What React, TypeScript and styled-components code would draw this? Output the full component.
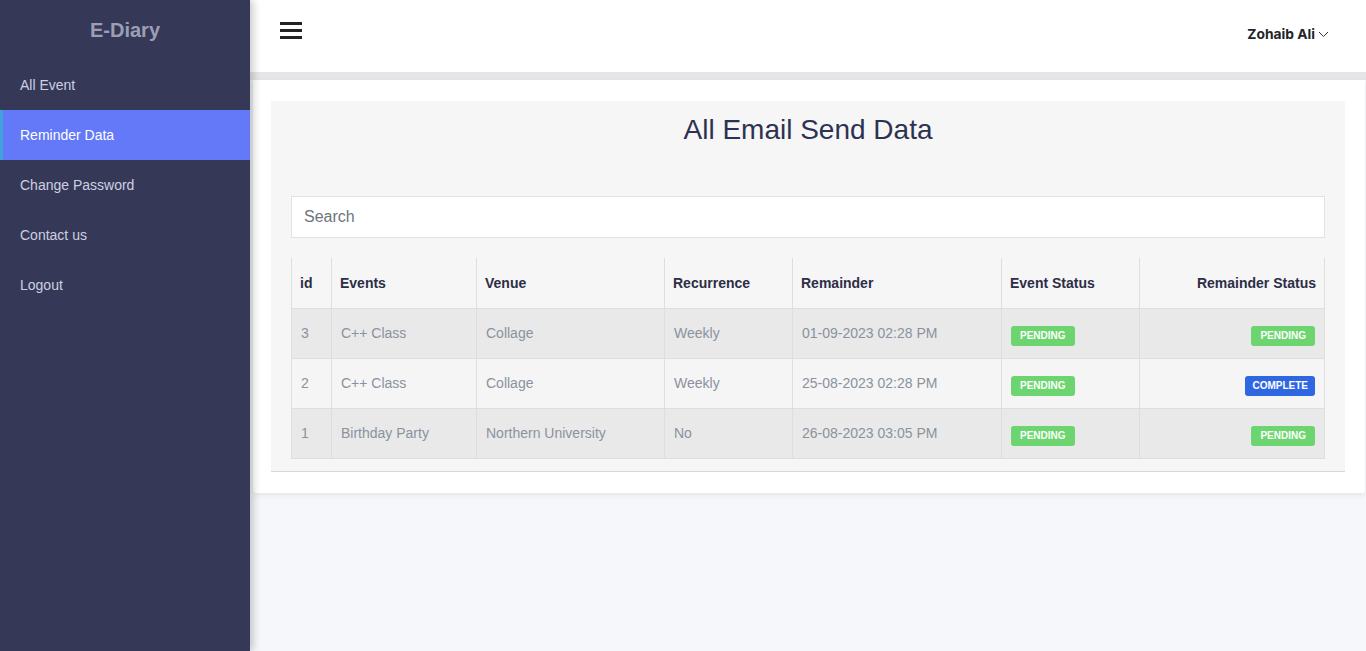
import React from "react";
import styled, { createGlobalStyle } from "styled-components";

const Global = createGlobalStyle`
  html, body { margin: 0; padding: 0; }
  body {
    font-family: "Liberation Sans", Arial, sans-serif;
    background: #f7f8fc;
  }
  * { box-sizing: border-box; }
`;

const Shell = styled.div`
  display: flex;
  width: 1366px;
  height: 651px;
  overflow: hidden;
`;

const Sidebar = styled.aside`
  width: 250px;
  flex-shrink: 0;
  height: 100%;
  background: #353957;
  box-shadow: 3px 0 8px rgba(0, 0, 0, 0.22);
  position: relative;
  z-index: 2;
  display: flex;
  flex-direction: column;
`;

const Brand = styled.div`
  height: 60px;
  display: flex;
  align-items: center;
  justify-content: center;
  font-size: 20px;
  font-weight: 700;
  color: #9c9fb3;
`;

const NavItem = styled.a<{ $active?: boolean }>`
  display: flex;
  align-items: center;
  height: 50px;
  font-size: 14px;
  color: ${(p) => (p.$active ? "#ffffff" : "#cdd0e3")};
  background: ${(p) => (p.$active ? "#6379f8" : "transparent")};
  border-left: 3px solid ${(p) => (p.$active ? "#3fa2d9" : "transparent")};
  padding-left: 17px;
  text-decoration: none;
  cursor: pointer;
`;

const Main = styled.div`
  flex: 1;
  display: flex;
  flex-direction: column;
  background: #f6f7fb;
`;

const Header = styled.header`
  height: 80px;
  background: #fff;
  border-bottom: 8px solid #e6e6e9;
  display: flex;
  align-items: flex-start;
  justify-content: space-between;
  padding: 22px 37px 0 30px;
`;

const Burger = styled.button`
  border: none;
  background: none;
  padding: 0;
  display: flex;
  cursor: pointer;
`;

const User = styled.div`
  display: flex;
  align-items: center;
  gap: 3px;
  font-family: Inter, "Liberation Sans", sans-serif;
  font-weight: 700;
  font-size: 13.8px;
  color: #212529;
  margin-top: 4px;
`;

const Card = styled.section`
  margin: 0 1px 0 3px;
  background: #fff;
  padding: 21px 20px 21px 18px;
  box-shadow: 0 2px 6px rgba(0, 0, 0, 0.08);
  border-radius: 0 0 3px 3px;
`;

const Panel = styled.div`
  background: #f6f6f6;
  border-bottom: 1px solid #d8d8d8;
  padding: 12px 20px 12px 20px;
`;

const Title = styled.h2`
  margin: 0 0 50px;
  text-align: center;
  font-weight: 400;
  font-size: 28px;
  line-height: 33px;
  color: #2e3252;
`;

const Search = styled.input`
  display: block;
  width: 100%;
  height: 42px;
  border: 1px solid #e2e2e2;
  background: #fff;
  padding: 0 12px;
  font-family: "Liberation Sans", Arial, sans-serif;
  font-size: 16px;
  color: #495057;
  outline: none;
  &::placeholder { color: #6d747c; }
`;

const Table = styled.table`
  margin-top: 20px;
  width: 100%;
  border-collapse: collapse;
  table-layout: fixed;
  font-size: 14px;
`;

const Th = styled.th<{ $right?: boolean }>`
  height: 50px;
  padding: 0 8px;
  text-align: ${(p) => (p.$right ? "right" : "left")};
  font-weight: 700;
  color: #2c2d47;
  border-left: 1px solid #dedede;
  border-right: 1px solid #dedede;
  border-bottom: 1px solid #dedede;
`;

const Tr = styled.tr<{ $odd?: boolean }>`
  background: ${(p) => (p.$odd ? "#e9e9e9" : "#f5f5f5")};
`;

const Td = styled.td<{ $right?: boolean }>`
  height: 50px;
  padding: 0 9px;
  color: #8a929e;
  text-align: ${(p) => (p.$right ? "right" : "left")};
  border: 1px solid #dedede;
`;

const Badge = styled.span<{ $tone: "green" | "blue" }>`
  display: inline-block;
  font-size: 10px;
  font-weight: 700;
  color: #fff;
  background: ${(p) => (p.$tone === "green" ? "#6dd56f" : "#2f67e2")};
  border-radius: 3px;
  line-height: 20px;
  height: 20px;
  margin-top: 5px;
  padding: 0 ${(p) => (p.$tone === "green" ? "9px" : "7px")};
  vertical-align: middle;
`;

const rows = [
  { id: 3, ev: "C++ Class", venue: "Collage", rec: "Weekly", rem: "01-09-2023 02:28 PM", rs: "PENDING" },
  { id: 2, ev: "C++ Class", venue: "Collage", rec: "Weekly", rem: "25-08-2023 02:28 PM", rs: "COMPLETE" },
  { id: 1, ev: "Birthday Party", venue: "Northern University", rec: "No", rem: "26-08-2023 03:05 PM", rs: "PENDING" },
];

const widths = [40, 145, 188, 128, 209, 138, 185];

export default function App() {
  return (
    <Shell>
      <Global />
      <Sidebar>
        <Brand>E-Diary</Brand>
        <NavItem>All Event</NavItem>
        <NavItem $active>Reminder Data</NavItem>
        <NavItem>Change Password</NavItem>
        <NavItem>Contact us</NavItem>
        <NavItem>Logout</NavItem>
      </Sidebar>
      <Main>
        <Header>
          <Burger aria-label="menu">
            <svg width="22" height="17" viewBox="0 0 22 17">
              <rect x="0" y="0" width="22" height="3" fill="#222" />
              <rect x="0" y="7" width="22" height="3" fill="#222" />
              <rect x="0" y="14" width="22" height="3" fill="#222" />
            </svg>
          </Burger>
          <User>
            Zohaib Ali
            <svg width="11" height="7" viewBox="0 0 11 7">
              <polyline points="1,1 5.5,5.5 10,1" fill="none" stroke="#333" strokeWidth="1" />
            </svg>
          </User>
        </Header>
        <Card>
          <Panel>
            <Title>All Email Send Data</Title>
            <Search placeholder="Search" />
            <Table>
              <colgroup>
                {widths.map((w, i) => (
                  <col key={i} style={{ width: w }} />
                ))}
              </colgroup>
              <thead>
                <tr>
                  <Th>id</Th>
                  <Th>Events</Th>
                  <Th>Venue</Th>
                  <Th>Recurrence</Th>
                  <Th>Remainder</Th>
                  <Th>Event Status</Th>
                  <Th $right>Remainder Status</Th>
                </tr>
              </thead>
              <tbody>
                {rows.map((r, i) => (
                  <Tr key={r.id} $odd={i % 2 === 0}>
                    <Td>{r.id}</Td>
                    <Td>{r.ev}</Td>
                    <Td>{r.venue}</Td>
                    <Td>{r.rec}</Td>
                    <Td>{r.rem}</Td>
                    <Td>
                      <Badge $tone="green">PENDING</Badge>
                    </Td>
                    <Td $right>
                      <Badge $tone={r.rs === "PENDING" ? "green" : "blue"}>{r.rs}</Badge>
                    </Td>
                  </Tr>
                ))}
              </tbody>
            </Table>
          </Panel>
        </Card>
      </Main>
    </Shell>
  );
}
